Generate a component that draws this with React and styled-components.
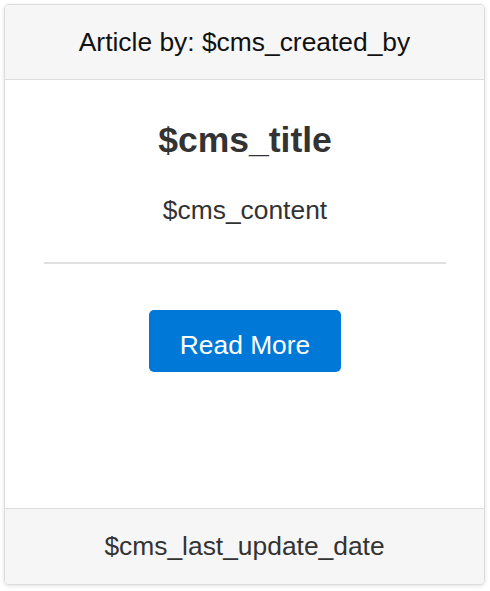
import styled, { createGlobalStyle } from 'styled-components'

const GlobalStyle = createGlobalStyle`
  html, body {
    margin: 0;
    padding: 0;
    background: #fff;
  }
  body {
    font-family: 'Liberation Sans', Arial, sans-serif;
  }
`

const Page = styled.div`
  padding: 4px 5px 6px 4px;
`

const Card = styled.div`
  width: 481px;
  height: 581px;
  box-sizing: border-box;
  display: flex;
  flex-direction: column;
  border: 1px solid #dcdcdc;
  border-radius: 5px;
  box-shadow: 0 1px 4px rgba(0, 0, 0, 0.12);
  overflow: hidden;
  background: #fff;
`

const Bar = styled.div`
  height: ${(props) => props.height}px;
  flex-shrink: 0;
  display: flex;
  align-items: center;
  justify-content: center;
  background: #f6f6f6;
  font-size: 26.4px;
  color: ${(props) => (props.dark ? '#111' : '#333')};
  border-top: ${(props) => props.bottom && '1px solid #dddddd'};
  border-bottom: ${(props) => !props.bottom && '1px solid #dddddd'};
`

const Body = styled.div`
  flex: 1;
  display: flex;
  flex-direction: column;
  align-items: center;
  padding: 40px 38px 0 39px;
`

const Title = styled.h2`
  margin: 0;
  font-size: 35.5px;
  line-height: 40px;
  font-weight: 700;
  color: #333;
`

const Content = styled.p`
  margin: 35px 0 0;
  font-size: 26.4px;
  line-height: 30px;
  color: #333;
`

const Hr = styled.hr`
  align-self: stretch;
  margin: 37px 0 0;
  border: none;
  height: 2px;
  background-color: #e0e0e0;
`

const Button = styled.button`
  margin-top: 46px;
  width: 192px;
  height: 62px;
  border: none;
  border-radius: 5px;
  background-color: #0078d7;
  color: #fff;
  font-family: inherit;
  font-size: 26.4px;
  padding: 8px 0 0;
  cursor: pointer;
`

const App = () => {
  return (
    <>
      <GlobalStyle />
      <Page>
        <Card>
          <Bar height={74} dark>
            Article by: $cms_created_by
          </Bar>
          <Body>
            <Title>$cms_title</Title>
            <Content>$cms_content</Content>
            <Hr />
            <Button>Read More</Button>
          </Body>
          <Bar height={75} bottom>
            $cms_last_update_date
          </Bar>
        </Card>
      </Page>
    </>
  )
}

export default App
